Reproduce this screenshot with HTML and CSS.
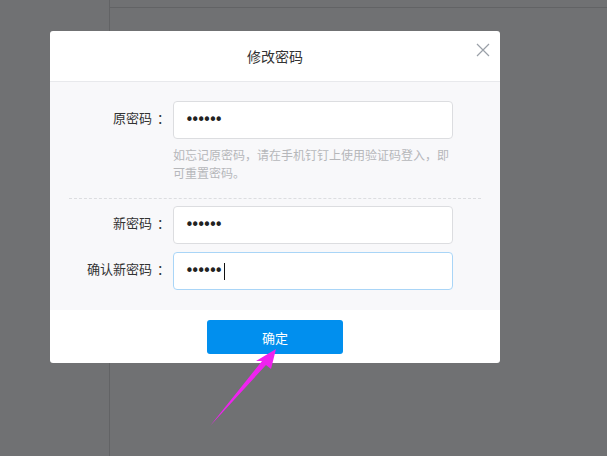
FILE: index.html
```html
<!DOCTYPE html>
<html lang="zh">
<head>
<meta charset="utf-8">
<title>修改密码</title>
<link rel="stylesheet" href="styles.css">
</head>
<body>
<div class="page">
  <aside class="sidebar"></aside>
  <div class="main">
    <div class="topbar"></div>
    <div class="content"></div>
  </div>
</div>

<div class="modal">
  <div class="modal-header">
    <h1 class="modal-title">修改密码</h1>
    <button class="close" type="button" aria-label="关闭">
      <svg width="14" height="14" viewBox="0 0 14 14"><path d="M1 1 L13 13 M13 1 L1 13" stroke="#9aa0a8" stroke-width="1.2" fill="none"/></svg>
    </button>
  </div>
  <div class="modal-body">
    <div class="row">
      <label class="label">原密码<span class="colon">：</span></label>
      <div class="field">
        <input class="input" type="password" value="123456">
        <p class="hint">如忘记原密码，请在手机钉钉上使用验证码登入，即可重置密码。</p>
      </div>
    </div>
    <div class="divider"></div>
    <div class="row">
      <label class="label">新密码<span class="colon">：</span></label>
      <div class="field"><input class="input" type="password" value="123456"></div>
    </div>
    <div class="row row-gap">
      <label class="label">确认新密码<span class="colon">：</span></label>
      <div class="field">
        <div class="input input-focus"><span class="dots">••••••</span><span class="caret"></span></div>
      </div>
    </div>
  </div>
  <div class="modal-footer">
    <button class="btn" type="button">确定</button>
  </div>
</div>

<svg class="arrow" width="607" height="456" viewBox="0 0 607 456">
  <polygon points="276,349 271,369 266,365 210,426 262,361 256,361" fill="#ef22ef"/>
</svg>
</body>
</html>
```

FILE: styles.css
```css
* { box-sizing: border-box; }
html, body { margin: 0; padding: 0; }
body {
  width: 607px;
  height: 456px;
  overflow: hidden;
  background: #707173;
  font-family: "Noto Sans CJK SC", "Noto Sans", sans-serif;
  color: #333;
  position: relative;
}
.page {
  display: grid;
  grid-template-columns: 110px 1fr;
  height: 456px;
}
.sidebar { border-right: 1px solid #626365; }
.main { display: flex; flex-direction: column; }
.topbar { height: 8px; border-bottom: 1px solid #626365; }
.content { flex: 1; }

.modal {
  position: absolute;
  left: 50px;
  top: 31px;
  width: 450px;
  background: #fff;
  border-radius: 3px;
  overflow: hidden;
}
.modal-header {
  height: 51px;
  border-bottom: 1px solid #e8e9ec;
  display: flex;
  align-items: center;
  justify-content: center;
  position: relative;
}
.modal-title {
  margin: 0;
  font-size: 14px;
  font-weight: normal;
  color: #333;
  line-height: 20px;
}
.close {
  position: absolute;
  right: 10px;
  top: 12px;
  width: 14px;
  height: 14px;
  padding: 0;
  border: 0;
  background: none;
  display: block;
}
.close svg { display: block; }

.modal-body {
  background: #f8f8fa;
  padding: 19px 0 20px;
}
.row {
  display: flex;
  align-items: flex-start;
}
.row-gap { margin-top: 8px; }
.label {
  width: 123px;
  padding-right: 3px;
  text-align: right;
  font-size: 13px;
  line-height: 33px;
  color: #333;
  white-space: nowrap;
}
.colon { padding-left: 5px; }
.field { width: 280px; }
.input {
  display: block;
  width: 280px;
  height: 38px;
  border: 1px solid #dcdde0;
  border-radius: 4px;
  background: #fff;
  padding: 0 11px;
  font-size: 15px;
  letter-spacing: -3px;
  color: #222;
  outline: none;
  font-family: "DejaVu Sans", sans-serif;
}
.input-focus {
  border-color: #a9d5f7;
  display: flex;
  align-items: center;
}
.dots {
  font-family: "DejaVu Sans", sans-serif;
  font-size: 15px;
  letter-spacing: -3px;
  color: #222;
  line-height: 1;
}
.caret {
  display: inline-block;
  width: 1px;
  height: 17px;
  background: #111;
  margin-left: 4px;
}
.hint {
  margin: 7px 0 0;
  font-size: 12px;
  line-height: 18px;
  color: #b6b7ba;
}
.divider {
  margin: 16px 19px 7px;
  border-top: 1px dashed #dcdde0;
}
.modal-footer {
  height: 53px;
  padding-top: 10px;
  display: flex;
  justify-content: center;
  align-items: flex-start;
}
.btn {
  width: 136px;
  height: 34px;
  border: 0;
  border-radius: 3px;
  background: #018fee;
  color: #fff;
  font-size: 13px;
  font-family: "Noto Sans CJK SC", sans-serif;
  padding: 0;
}
.arrow {
  position: absolute;
  left: 0;
  top: 0;
  pointer-events: none;
}
```
